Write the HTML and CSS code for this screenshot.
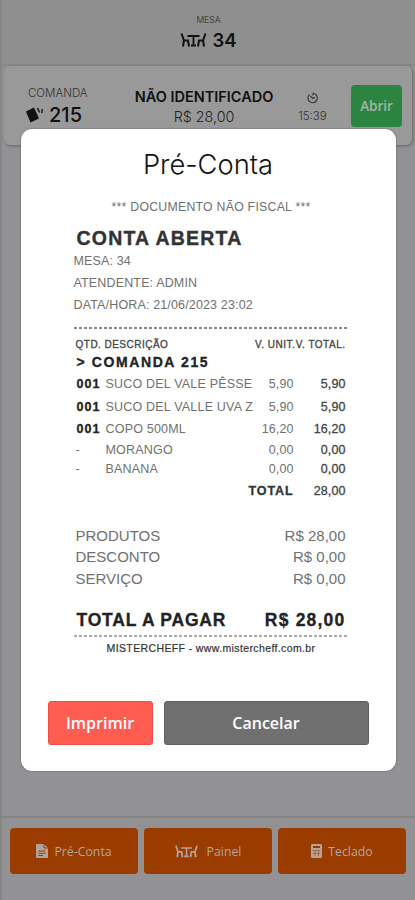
FILE: index.html
```
<!DOCTYPE html>
<html lang="pt-BR">

<head>
    <meta charset="UTF-8">
    <meta name="viewport" content="width=device-width, initial-scale=1.0">
    <title>Pré-Conta</title>
    <link rel="stylesheet" href="styles.css">
</head>

<body>
    <svg width="0" height="0" class="sprite">
        <symbol id="table" viewBox="0 0 26 14">
            <path d="M1 0.500L3.500 7.500H7.500L8.500 13.500M3.500 7L2.500 13.500M25 0.500L22.500 7.500H18.500L17.500 13.500M22.500 7L23.500 13.500" fill="none" stroke="currentColor" stroke-width="2" />
            <path d="M7 3H19M13 3V12.500M10.500 12.500H15.500" fill="none" stroke="currentColor" stroke-width="1.800" />
        </symbol>
    </svg>

    <div class="app">
        <header class="header">
            <span class="header-label">MESA</span>
            <div class="header-table">
                <svg class="table-icon"><use href="#table" /></svg>
                <span>34</span>
            </div>
        </header>

        <section class="order-card">
            <div class="order-number">
                <span class="order-label">COMANDA</span>
                <div class="order-value">
                    <svg class="cards-icon" viewBox="0 0 18 16">
                        <path d="M0.500 4.500L8.500 0.500L13.500 11.500L5 15.500Z" fill="currentColor" />
                        <path d="M12 1L14 5.500M16.800 2L16.300 6" fill="none" stroke="currentColor" stroke-width="1.400" />
                    </svg>
                    <span>215</span>
                </div>
            </div>
            <div class="order-client">
                <strong>NÃO IDENTIFICADO</strong>
                <span>R$ 28,00</span>
            </div>
            <div class="order-time">
                <svg class="clock-icon" viewBox="0 0 12 12">
                    <path d="M2.500 2.500A4.700 4.700 0 1 0 6 1.300V3.500M3.500 4L6 6.500L8 5.500" fill="none" stroke="currentColor" stroke-width="1.100" />
                </svg>
                <span>15:39</span>
            </div>
            <button class="open-btn">Abrir</button>
        </section>

        <footer class="footer">
            <button class="footer-btn">
                <svg class="file-icon" viewBox="0 0 12 14">
                    <path d="M1 0H8L12 4V14H1Q0 14 0 13V1Q0 0 1 0Z" fill="currentColor" />
                    <path d="M8 0V4H12M2.500 7H9.500M2.500 9.300H9.500M2.500 11.500H7" fill="none" stroke="#9a3c00" />
                </svg>
                Pré-Conta
            </button>
            <button class="footer-btn footer-btn-panel">
                <svg class="panel-icon"><use href="#table" /></svg>
                Painel
            </button>
            <button class="footer-btn">
                <svg class="calc-icon" viewBox="0 0 11 14">
                    <rect width="11" height="14" rx="1.200" fill="currentColor" />
                    <path d="M2 3H9" stroke="#9a3c00" stroke-width="2" />
                    <path d="M1.500 6.500H9.500M1.500 9.500H9.500M4 6V12.500M7.500 6V12.500" stroke="#9a3c00" stroke-width="0.500" />
                </svg>
                Teclado
            </button>
        </footer>
    </div>

    <div class="modal">
        <h1 class="modal-title">Pré-Conta</h1>

        <div class="receipt">
            <p class="notice">*** DOCUMENTO NÃO FISCAL ***</p>
            <h2 class="status">CONTA ABERTA</h2>
            <p class="info">MESA: 34</p>
            <p class="info">ATENDENTE: ADMIN</p>
            <p class="info info-date">DATA/HORA: 21/06/2023 23:02</p>

            <div class="divider"></div>
            <div class="items">
                <div class="items-head">
                    <span class="col-qty">QTD.</span>
                    <span class="col-desc">DESCRIÇÃO</span>
                    <span class="col-unit">V. UNIT.</span>
                    <span class="col-total">V. TOTAL.</span>
                </div>
                <div class="items-group">&gt; COMANDA 215</div>
                <div class="item">
                    <b>001</b><span>SUCO DEL VALE PÊSSE</span><span class="num">5,90</span><span class="num total">5,90</span>
                </div>
                <div class="item">
                    <b>001</b><span>SUCO DEL VALLE UVA Z</span><span class="num">5,90</span><span class="num total">5,90</span>
                </div>
                <div class="item">
                    <b>001</b><span>COPO 500ML</span><span class="num">16,20</span><span class="num total">16,20</span>
                </div>
                <div class="item item-extra">
                    <span>-</span><span>MORANGO</span><span class="num">0,00</span><span class="num total">0,00</span>
                </div>
                <div class="item item-extra">
                    <span>-</span><span>BANANA</span><span class="num">0,00</span><span class="num total">0,00</span>
                </div>
                <div class="items-total">
                    <b>TOTAL</b><span class="num total">28,00</span>
                </div>
            </div>

            <div class="summary">
                <div class="summary-row"><span>PRODUTOS</span><span>R$ 28,00</span></div>
                <div class="summary-row"><span>DESCONTO</span><span>R$ 0,00</span></div>
                <div class="summary-row"><span>SERVIÇO</span><span>R$ 0,00</span></div>
            </div>
            <div class="grand-total"><span>TOTAL A PAGAR</span><span class="grand-value">R$ 28,00</span></div>
            <div class="divider divider-light"></div>
            <p class="site">MISTERCHEFF - www.mistercheff.com.br</p>
        </div>

        <div class="modal-actions">
            <button class="modal-btn print-btn">Imprimir</button>
            <button class="modal-btn cancel-btn">Cancelar</button>
        </div>
    </div>
</body>

</html>
```
FILE: styles.css
```
* {
    margin: 0;
    padding: 0;
    box-sizing: border-box;
}

body {
    width: 415px;
    height: 900px;
    overflow: hidden;
    font-family: Inter, "Liberation Sans", sans-serif;
    background-color: #929294;
}

button {
    border: none;
    font-family: "Open Sans", "Noto Sans", sans-serif;
    cursor: pointer;
}

.sprite {
    position: absolute;
}

.app {
    height: 900px;
    display: flex;
    flex-direction: column;
    border-left: 2px solid #868688;
}

.header {
    height: 66px;
    padding-top: 15px;
    display: flex;
    flex-direction: column;
    align-items: center;
    background-color: #8f8f8f;
    border-bottom: 2px solid #888;
}

.header-label {
    font-size: 8.5px;
    line-height: 10px;
    color: #444;
}

.header-table {
    display: flex;
    align-items: center;
    gap: 5px;
    margin-top: 3px;
    font-size: 18.5px;
    line-height: 24px;
    font-weight: 600;
    color: #111;
}

.table-icon {
    width: 27px;
    height: 14px;
}

.order-card {
    height: 79px;
    margin: 0 3px 0 2px;
    display: grid;
    grid-template-columns: 107px 186px 31px 58px;
    border-radius: 6px;
    background-color: #999;
    box-shadow: 1px 1px 3px rgba(0, 0, 0, 0.3);
}

.order-number {
    padding: 19px 0 0 21px;
}

.order-label {
    display: block;
    padding-left: 3px;
    font-size: 11.5px;
    line-height: 16px;
    font-weight: 300;
    color: #333;
}

.order-value {
    display: flex;
    align-items: center;
    gap: 5px;
    margin-top: 2px;
    font-size: 20px;
    line-height: 24px;
    font-weight: 500;
    color: #111;
}

.cards-icon {
    width: 19px;
    height: 16px;
}

.order-client {
    padding-top: 20px;
    display: flex;
    flex-direction: column;
    align-items: center;
    color: #111;
}

.order-client strong {
    font-size: 14.5px;
    line-height: 21px;
    font-weight: 600;
    white-space: nowrap;
}

.order-client span {
    font-size: 14.3px;
    line-height: 19px;
    font-weight: 300;
    color: #222;
}

.order-time {
    padding-top: 26px;
    display: flex;
    flex-direction: column;
    align-items: center;
    font-size: 11.5px;
    font-weight: 300;
    color: #333;
}

.clock-icon {
    width: 12px;
    height: 12px;
    margin-bottom: 5px;
}

.order-time span {
    line-height: 14px;
}

.open-btn {
    width: 51px;
    height: 42px;
    margin: 19px 0 0 23px;
    border-radius: 4px;
    font-size: 13.5px;
    font-weight: 600;
    color: #a5b5a6;
    background-color: #2b8440;
}

.footer {
    height: 84px;
    margin-top: auto;
    padding: 10px 9px 0 8px;
    display: flex;
    gap: 6px;
    border-top: 2px solid #858586;
}

.footer-btn {
    flex: 1;
    height: 46px;
    display: flex;
    align-items: center;
    justify-content: center;
    gap: 6px;
    border-radius: 4px;
    font-size: 12.3px;
    color: #b2a49c;
    background-color: #9a3c00;
}

.footer-btn-panel {
    gap: 9px;
}

.panel-icon {
    width: 23px;
    height: 13px;
}

.file-icon {
    width: 12px;
    height: 14px;
}

.calc-icon {
    width: 11px;
    height: 14px;
}

.modal {
    position: absolute;
    top: 129px;
    left: 20.5px;
    width: 375px;
    height: 642px;
    padding: 18px 27px 26px;
    display: flex;
    flex-direction: column;
    border-radius: 11px;
    background-color: #fff;
    box-shadow: 0 0 2px rgba(0, 0, 0, 0.4);
}

.modal-title {
    font-size: 27.3px;
    line-height: 36px;
    font-weight: 300;
    text-align: center;
    color: #111;
}

/* Receipt */
.receipt {
    margin: 16px 20px 0 26px;
    font-family: "Liberation Sans", Arial, sans-serif;
    color: #707070;
    white-space: nowrap;
}

.notice {
    font-size: 12.3px;
    line-height: 16px;
    letter-spacing: 0.25px;
    text-align: center;
}

.status {
    margin-top: 11px;
    padding-left: 3px;
    font-size: 19.5px;
    line-height: 24px;
    letter-spacing: 1.2px;
    color: #333;
    -webkit-text-stroke: 0.4px #333;
}

.info {
    font-size: 12.5px;
    line-height: 22px;
    letter-spacing: 0.15px;
}

.info-date {
    padding-bottom: 11px;
}

.divider {
    height: 2px;
    background: repeating-linear-gradient(to right, #888 0 3px, #fff 3px 5px);
}

.divider-light {
    background: repeating-linear-gradient(to right, #aaa 0 3px, #fff 3px 5px);
}

.items {
    padding: 8px 3px 0 2px;
    font-size: 12.5px;
    letter-spacing: 0.1px;
}

.items-head {
    display: flex;
    font-size: 10px;
    line-height: 15px;
    letter-spacing: 0.5px;
    color: #444;
    -webkit-text-stroke: 0.3px #444;
}

.col-qty {
    width: 29px;
}

.col-desc {
    width: 151px;
}

.col-unit {
    width: 41px;
}

.items-group {
    padding-left: 1px;
    font-size: 14px;
    line-height: 21px;
    font-weight: bold;
    letter-spacing: 1.6px;
    color: #222;
    -webkit-text-stroke: 0.3px #222;
}

.item {
    display: grid;
    grid-template-columns: 30px 1fr 40px 52px;
    line-height: 22.5px;
}

.item > span:nth-child(2) {
    letter-spacing: 0.2px;
}

.item b {
    letter-spacing: 1px;
    padding-left: 1px;
    color: #222;
    -webkit-text-stroke: 0.3px #222;
}

.item-extra {
    line-height: 19.5px;
}

.num {
    text-align: right;
}

.total {
    color: #444;
    -webkit-text-stroke: 0.3px #444;
}

.items-total {
    display: grid;
    grid-template-columns: 1fr 52px;
    line-height: 22px;
}

.items-total b {
    text-align: right;
    letter-spacing: 0.9px;
    color: #333;
    -webkit-text-stroke: 0.3px #333;
}

.summary {
    margin-top: 23px;
    padding: 0 3px 0 2px;
    font-size: 15px;
}

.summary-row {
    display: flex;
    justify-content: space-between;
    line-height: 21.5px;
}

.grand-total {
    margin-top: 19px;
    padding: 0 3px 3px;
    display: flex;
    justify-content: space-between;
    font-size: 17.5px;
    line-height: 24px;
    font-weight: bold;
    letter-spacing: 0.8px;
    color: #222;
    -webkit-text-stroke: 0.3px #222;
}

.grand-value {
    letter-spacing: 1.2px;
}

.site {
    font-size: 10.5px;
    line-height: 22px;
    letter-spacing: 0.38px;
    text-align: center;
    color: #333;
    -webkit-text-stroke: 0.2px #333;
}

.modal-actions {
    display: flex;
    gap: 11px;
    margin-top: auto;
}

.modal-btn {
    height: 44px;
    border-radius: 3px;
    font-size: 16px;
    font-weight: 600;
    color: #fff;
}

.print-btn {
    width: 105px;
    background-color: #ff5c52;
    border: 1px solid #f04c43;
}

.cancel-btn {
    width: 205px;
    background-color: #707070;
    border: 1px solid #5e5e5e;
}
```
